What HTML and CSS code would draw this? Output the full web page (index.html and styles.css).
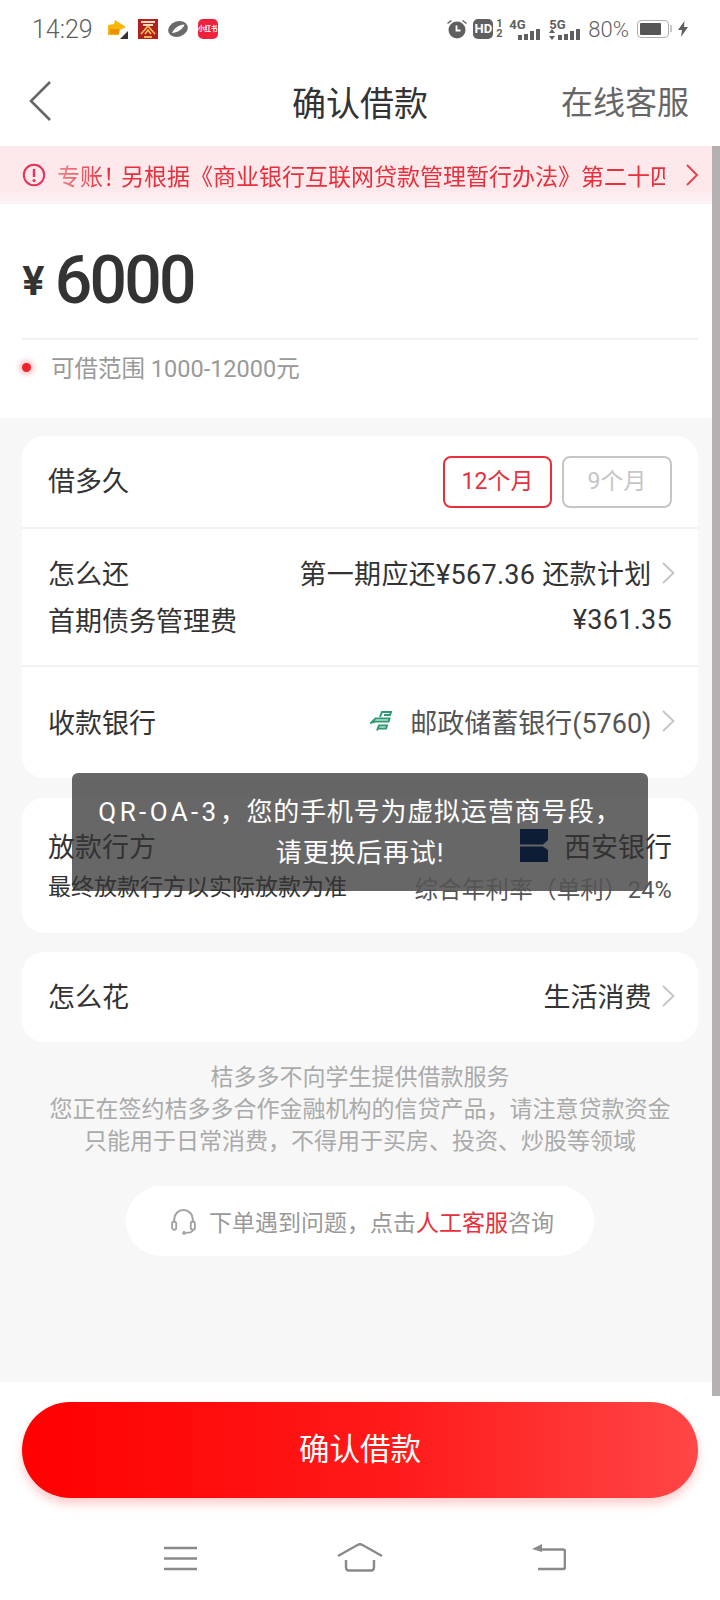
FILE: index.html
```html
<!DOCTYPE html>
<html lang="zh-CN">
<head>
  <meta charset="utf-8">
  <title>确认借款</title>
  <link rel="stylesheet" href="styles.css">
</head>
<body>
  <div class="page">

    <div class="status-bar">
      <div class="status-left">
        <span class="clock">14:29</span>
        <svg class="app-icon" viewBox="0 0 20 20">
          <path d="M0 6l6-1 1-4 11 7-6 3-1 5H0z" fill="#f5b80a"/>
          <path d="M2 10h9v5H2z" fill="#ea9200"/>
          <path d="M20 12v8h-8z" fill="#333"/>
        </svg>
        <svg class="app-icon" viewBox="0 0 20 20">
          <rect width="20" height="20" fill="#b3201e"/>
          <path d="M3 2h14v2H3zM5 5h10v2H5z" fill="#f8dcc0"/>
          <path d="M3 15l7-8 7 8M7 15l3-4 3 4" stroke="#f3c45a" stroke-width="1.6" fill="none"/>
          <path d="M6 17h8v2H6z" fill="#e9b54c"/>
        </svg>
        <svg class="app-icon" viewBox="0 0 20 20">
          <ellipse cx="10" cy="10" rx="10" ry="7.6" fill="#6a6a6a" transform="rotate(-20 10 10)"/>
          <path d="M4 14C6 9 11 6 16.5 5.5 15 10 9 14 4 14z" fill="#fff"/>
        </svg>
        <span class="book-icon">小红书</span>
      </div>
      <div class="status-right">
        <svg class="alarm" viewBox="0 0 20 20">
          <circle cx="10" cy="11" r="8.5" fill="#5f5f5f"/>
          <path d="M9.5 6.5v5h4" stroke="#fff" stroke-width="1.8" fill="none"/>
          <path d="M0.5 4.5l4-3M19.5 4.5l-4-3" stroke="#5f5f5f" stroke-width="1.4"/>
        </svg>
        <span class="hd-badge">HD</span>
        <span class="sim-nums"><span>1</span><span>2</span></span>
        <span class="signal">
          <span class="net">4G</span>
          <span class="bars"><i class="b1"></i><i class="b2"></i><i class="b3"></i><i class="b4"></i></span>
        </span>
        <span class="signal">
          <span class="net">5G</span>
          <svg class="updown" viewBox="0 0 6 11"><path d="M3 0l3 4H0zM0 7h6l-3 4z" fill="#5f5f5f"/></svg>
          <span class="bars"><i class="b1"></i><i class="b2"></i><i class="b3"></i><i class="b4"></i></span>
        </span>
        <span class="pct">80%</span>
        <span class="battery"><span class="battery-fill"></span></span>
        <svg class="bolt" viewBox="0 0 10 16"><path d="M6.5 0L0 9h4l-1 7 7-10H6z" fill="#5f5f5f"/></svg>
      </div>
    </div>

    <div class="nav-bar">
      <svg class="back" viewBox="0 0 24 42"><path d="M22 2L3 21l19 19" stroke="#666" stroke-width="2.6" fill="none"/></svg>
      <h1 class="nav-title">确认借款</h1>
      <span class="nav-action">在线客服</span>
    </div>

    <div class="notice">
      <svg class="notice-icon" viewBox="0 0 24 24">
        <circle cx="12" cy="12" r="10.2" stroke="#e8315a" stroke-width="2" fill="none"/>
        <path d="M12 6v8" stroke="#e8315a" stroke-width="2.4"/>
        <circle cx="12" cy="17.5" r="1.5" fill="#e8315a"/>
      </svg>
      <div class="notice-text">专账<span class="notice-mark">！</span>另根据《商业银行互联网贷款管理暂行办法》第二十四</div>
      <svg class="notice-arrow" viewBox="0 0 14 24"><path d="M2 2l10 10L2 22" stroke="#e8414a" stroke-width="2" fill="none"/></svg>
    </div>

    <section class="amount">
      <div class="amount-value"><span class="yen">¥</span><span class="sum">6000</span></div>
      <div class="amount-range"><span class="red-dot"></span>可借范围 1000-12000元</div>
    </section>

    <main class="content">
      <div class="card">
        <div class="row row-term">
          <span class="label">借多久</span>
          <div class="terms">
            <span class="term term-on">12个月</span>
            <span class="term term-off">9个月</span>
          </div>
        </div>
        <div class="row row-repay">
          <div class="line">
            <span class="label">怎么还</span>
            <span class="value value-wide">第一期应还¥567.36 还款计划<svg class="chev" viewBox="0 0 15 24"><path d="M2 2l10.5 10L2 22"/></svg></span>
          </div>
          <div class="line">
            <span class="label">首期债务管理费</span>
            <span class="value value-wide">¥361.35</span>
          </div>
        </div>
        <div class="row row-bank">
          <span class="label">收款银行</span>
          <span class="value value-bank">
            <svg class="postal" viewBox="0 0 22 22">
              <path d="M10 7l2-5h9l-1 3h-6" stroke="#2f9a72" stroke-width="2" fill="none"/>
              <path d="M1.500 12.500l4-4h14l-1 3h-13z" stroke="#2f9a72" stroke-width="2" fill="none"/>
              <path d="M7 20.500l2-5h8l-1 3H7" stroke="#2f9a72" stroke-width="2" fill="none"/>
            </svg>
            <span class="bank-name">邮政储蓄银行(5760)</span><svg class="chev" viewBox="0 0 15 24"><path d="M2 2l10.5 10L2 22"/></svg>
          </span>
        </div>
      </div>

      <div class="card card-lender">
        <div class="line line-main">
          <span class="label">放款行方</span>
          <span class="value">
            <svg class="xian" viewBox="0 0 28 33">
              <path d="M0 0h28v11l-5 4.500H0z" fill="#0e1d36"/>
              <path d="M0 17.500h23l5 3.500v12H0z" fill="#0e1d36"/>
            </svg>
            西安银行
          </span>
        </div>
        <div class="line line-small">
          <span class="note">最终放款行方以实际放款为准</span>
          <span class="note note-rate">综合年利率（单利）24%</span>
        </div>
      </div>

      <div class="card card-use">
        <div class="row row-use">
          <span class="label">怎么花</span>
          <span class="value">生活消费<svg class="chev" viewBox="0 0 15 24"><path d="M2 2l10.5 10L2 22"/></svg></span>
        </div>
      </div>

      <p class="disclaimer">桔多多不向学生提供借款服务<br>您正在签约桔多多合作金融机构的信贷产品，请注意贷款资金<br>只能用于日常消费，不得用于买房、投资、炒股等领域</p>

      <div class="help-pill">
        <svg class="headset" viewBox="0 0 26 26">
          <path d="M4 14v-3a9 9 0 0 1 18 0v3" stroke="#a3a3a3" stroke-width="2" fill="none"/>
          <rect x="2" y="13" width="4" height="8" rx="2" stroke="#a3a3a3" stroke-width="1.8" fill="none"/>
          <rect x="20" y="13" width="4" height="8" rx="2" stroke="#a3a3a3" stroke-width="1.8" fill="none"/>
          <path d="M22 21c0 2-3 3-7 3" stroke="#a3a3a3" stroke-width="1.8" fill="none"/>
          <circle cx="13.5" cy="24" r="1.8" fill="#a3a3a3"/>
        </svg>
        <span>下单遇到问题，点击<em>人工客服</em>咨询</span>
      </div>
    </main>

    <div class="footer">
      <button class="confirm">确认借款</button>
    </div>

    <div class="sys-nav">
      <svg class="sys-menu" viewBox="0 0 33 25"><path d="M0 2h33M0 12.500h33M0 23h33" stroke="#8a8a8a" stroke-width="2.6"/></svg>
      <svg class="sys-home" viewBox="0 0 46 29">
        <path d="M1 13L20.500 2q2.500-1.400 5 0L45 13" stroke="#8a8a8a" stroke-width="2.4" fill="none"/>
        <path d="M9 17v7q0 3.500 3 3.500h22q3 0 3-3.500v-7" stroke="#8a8a8a" stroke-width="2.4" fill="none"/>
      </svg>
      <svg class="sys-back" viewBox="0 0 34 27"><path d="M8 5.500h23q2 0 2 2V23q0 2-2 2H6" stroke="#8a8a8a" stroke-width="2.6" fill="none"/><path d="M0 5l10-5v8z" fill="#8a8a8a"/></svg>
    </div>

    <div class="scrollbar"></div>
    <div class="toast"><span class="toast-code">QR-OA-3</span>，您的手机号为虚拟运营商号段，<br>请更换后再试!</div>
  </div>
</body>
</html>
```

FILE: styles.css
```css
* {
  box-sizing: border-box;
}
html, body {
  margin: 0;
  padding: 0;
}
body {
  background: #fff;
  font-family: "Roboto", "Noto Sans CJK SC", sans-serif;
  color: #333;
}
p, h1 {
  margin: 0;
  font-weight: 400;
}
.page {
  position: relative;
  width: 720px;
  height: 1600px;
  overflow: hidden;
  display: flex;
  flex-direction: column;
}

/* status bar */
.status-bar {
  height: 56px;
  padding: 2px 32px 0;
  display: flex;
  justify-content: space-between;
  align-items: center;
  color: #5f5f5f;
}
.status-left, .status-right {
  display: flex;
  align-items: center;
}
.clock {
  font-size: 25px;
  font-weight: 300;
  margin-right: 15px;
}
.app-icon {
  width: 20px;
  height: 20px;
  margin-right: 10px;
}
.book-icon {
  width: 20px;
  height: 20px;
  border-radius: 5px;
  background: #f0213c;
  color: #fff;
  font-size: 6.5px;
  font-weight: 700;
  line-height: 20px;
  text-align: center;
  white-space: nowrap;
}
.alarm {
  width: 20px;
  height: 20px;
  margin-right: 6px;
}
.hd-badge {
  width: 20px;
  height: 20px;
  border-radius: 5px;
  background: #5f5f5f;
  color: #fff;
  font-size: 13px;
  font-weight: 700;
  line-height: 20px;
  text-align: center;
}
.sim-nums {
  width: 7px;
  display: flex;
  flex-direction: column;
  font-size: 11px;
  font-weight: 700;
  line-height: 10px;
  margin: 0 6px 0 3px;
}
.signal {
  width: 31px;
  height: 21px;
  margin-right: 9px;
  position: relative;
}
.signal + .signal {
  margin-right: 8px;
}
.net {
  position: absolute;
  left: 0;
  top: -2px;
  font-size: 13px;
  font-weight: 700;
}
.updown {
  position: absolute;
  left: 0;
  bottom: 0;
  width: 6px;
  height: 11px;
}
.bars {
  position: absolute;
  right: 0;
  bottom: 0;
  display: flex;
  gap: 2px;
  align-items: flex-end;
}
.bars i {
  display: block;
  width: 4px;
  background: #5f5f5f;
}
.b1 { height: 5px; }
.b2 { height: 6px; }
.b3 { height: 9px; }
.b4 { height: 11px; }
.pct {
  font-size: 22px;
  font-weight: 300;
  margin-right: 8px;
}
.battery {
  width: 32px;
  height: 18px;
  border: 1.5px solid #b0b0b0;
  border-radius: 4px;
  padding: 2px;
  margin-right: 9px;
  display: flex;
  position: relative;
}
.battery::after {
  content: "";
  position: absolute;
  right: -4px;
  top: 4px;
  width: 2px;
  height: 7px;
  background: #c8c8c8;
}
.battery-fill {
  width: 82%;
  background: #555;
  border-radius: 1px;
}
.bolt {
  width: 10px;
  height: 16px;
}

/* header */
.nav-bar {
  height: 90px;
  padding: 0 31px 0 28px;
  display: flex;
  align-items: center;
  justify-content: space-between;
  position: relative;
}
.back {
  width: 24px;
  height: 42px;
}
.nav-title {
  font-size: 34px;
  color: #333;
  position: absolute;
  left: 0;
  right: 0;
  text-align: center;
}
.nav-action {
  font-size: 32px;
  color: #666;
  position: relative;
  margin-top: -2px;
}

/* notice */
.notice {
  height: 58px;
  padding-left: 22px;
  background: linear-gradient(#fde9ec, #fde9ec 75%, #fdf3f5);
  display: flex;
  align-items: center;
}
.notice-icon {
  width: 24px;
  height: 24px;
  flex: none;
}
.notice-text {
  width: 608px;
  margin-left: 11px;
  overflow: hidden;
  white-space: nowrap;
  font-size: 23px;
  color: #e8303c;
  -webkit-mask-image: linear-gradient(90deg, rgba(0, 0, 0, 0.55), #000 50px);
  mask-image: linear-gradient(90deg, rgba(0, 0, 0, 0.55), #000 50px);
}
.notice-mark {
  letter-spacing: -5px;
}
.notice-arrow {
  width: 14px;
  height: 24px;
  margin-left: 20px;
  flex: none;
}

/* amount */
.amount {
  height: 214px;
  padding: 0 22px;
  display: flex;
  flex-direction: column;
}
.amount-value {
  height: 136px;
  border-bottom: 2px solid #f2f2f2;
  display: flex;
  align-items: center;
  color: #333;
  padding-top: 18px;
}
.yen {
  font-family: "Inter", sans-serif;
  font-size: 40px;
  font-weight: 700;
  margin-right: 10px;
}
.sum {
  font-size: 66px;
  font-weight: 500;
  letter-spacing: -2.75px;
}
.amount-range {
  display: flex;
  align-items: center;
  height: 54px;
  font-size: 23.5px;
  color: #999;
}
.red-dot {
  width: 9px;
  height: 9px;
  margin-right: 20px;
  border-radius: 50%;
  background: #f0212c;
  box-shadow: 0 0 5px 3px rgba(240, 33, 44, 0.25);
}

/* content */
.content {
  height: 964px;
  background: #f7f7f7;
  padding: 18px 22px 0;
  display: flex;
  flex-direction: column;
}
.card {
  background: #fff;
  border-radius: 22px;
  margin-bottom: 20px;
}
.row {
  padding: 0 26px;
  border-bottom: 2px solid #f2f2f2;
}
.row:last-child {
  border-bottom: 0;
}
.row-term, .row-bank, .row-use {
  display: flex;
  justify-content: space-between;
  align-items: center;
}
.row-term {
  height: 93px;
}
.row-term .label {
  margin-bottom: 5px;
}
.row-repay {
  height: 138px;
  padding-top: 20px;
}
.row-bank {
  height: 111px;
  padding-bottom: 3px;
}
.row-use {
  height: 90px;
  padding-bottom: 3px;
}
.line {
  display: flex;
  justify-content: space-between;
  align-items: center;
  height: 47px;
}
.label, .value {
  font-size: 27px;
  color: #333;
  white-space: nowrap;
}
.value {
  display: flex;
  align-items: center;
}
.value-wide {
  letter-spacing: 0.3px;
}
.chev {
  width: 15px;
  height: 24px;
  margin-left: 9px;
  margin-right: -3.5px;
  fill: none;
  stroke: #c4c4c4;
  stroke-width: 1.8;
}
.terms {
  display: flex;
  gap: 10px;
}
.term {
  height: 52px;
  border-radius: 8px;
  font-size: 23px;
  line-height: 48px;
  text-align: center;
  border: 2px solid;
}
.term-on {
  width: 109px;
  color: #e8303c;
  border-color: #e8303c;
}
.term-off {
  width: 110px;
  color: #c6c6c6;
  border-color: #c6c6c6;
}
.postal {
  width: 22px;
  height: 22px;
  margin-right: 18px;
}
.bank-name {
  color: #555;
}
.card-lender {
  height: 135px;
  padding: 25px 26px 0;
  margin-bottom: 19px;
}
.card-lender .line {
  position: relative;
  z-index: 2;
}
.card-lender .line-main {
  height: 44px;
}
.card-use {
  margin-bottom: 20px;
}
.xian {
  width: 28px;
  height: 33px;
  margin-right: 16px;
}
.card-lender .line-small {
  height: 36px;
}
.note {
  font-size: 23px;
  color: #333;
}
.note-rate {
  position: relative;
  top: 3px;
  color: #555;
  font-size: 23.5px;
  letter-spacing: 0.2px;
}
.disclaimer {
  font-size: 23px;
  line-height: 32px;
  color: #aaa;
  text-align: center;
}
.help-pill {
  align-self: center;
  width: 468px;
  height: 70px;
  margin-top: 28px;
  padding-left: 44px;
  border-radius: 35px;
  background: #fff;
  display: flex;
  align-items: center;
  gap: 12px;
  font-size: 23px;
  color: #999;
}
.help-pill em {
  font-style: normal;
  color: #e8303c;
}
.headset {
  width: 27px;
  height: 27px;
}

/* bottom */
.footer {
  height: 128px;
  padding: 20px 22px 0;
}
.confirm {
  width: 100%;
  height: 96px;
  border: 0;
  border-radius: 48px;
  padding: 0 0 6px;
  background: linear-gradient(90deg, #ff0000, #ff1a1a 55%, #ff4646);
  box-shadow: 0 6px 10px rgba(255, 60, 60, 0.25);
  color: #fff;
  font-family: inherit;
  font-size: 30.5px;
  font-weight: 400;
}
.sys-nav {
  flex: 1;
  display: flex;
  align-items: flex-start;
  padding: 33px 154px 0 164px;
  justify-content: space-between;
}
.sys-menu {
  width: 33px;
  height: 25px;
  margin-top: 3px;
}
.sys-home {
  width: 46px;
  height: 29px;
  margin-right: 9px;
}
.sys-back {
  width: 34px;
  height: 27px;
  margin-top: 1px;
}

/* overlays */
.scrollbar {
  position: absolute;
  top: 146px;
  right: 0;
  width: 8px;
  height: 1250px;
  background: #b5b1b3;
}
.toast {
  position: absolute;
  z-index: 1;
  left: 72px;
  top: 773px;
  width: 576px;
  height: 118px;
  padding-top: 19px;
  border-radius: 6px;
  background: rgba(60, 60, 60, 0.78);
  color: #fff;
  font-size: 26px;
  letter-spacing: 0.8px;
  line-height: 41px;
  text-align: center;
}
.toast-code {
  letter-spacing: 3.4px;
}
```
